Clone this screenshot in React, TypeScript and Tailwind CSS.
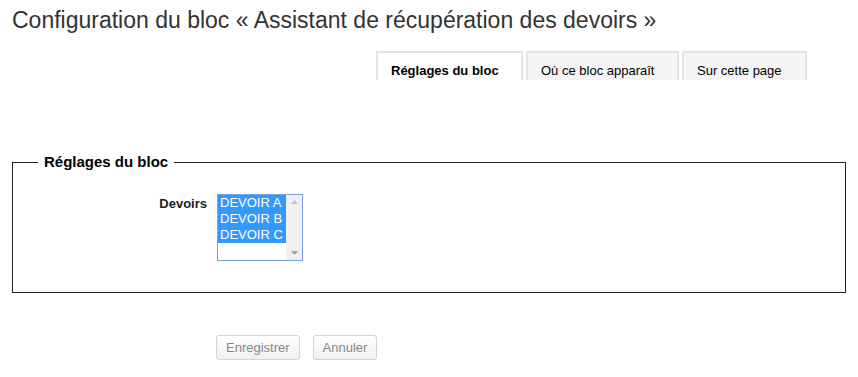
const tabs = [
  { label: "Réglages du bloc", active: true, w: "w-[147px]" },
  { label: "Où ce bloc apparaît", active: false, w: "w-[153px]" },
  { label: "Sur cette page", active: false, w: "w-[125px]" },
];

const devoirs = ["DEVOIR A", "DEVOIR B", "DEVOIR C"];

export default function App() {
  return (
    <div className="h-[377px] w-[858px] overflow-hidden bg-white font-['Liberation_Sans',Arial,sans-serif] text-[#333]">
      <h2 className="px-3 pt-[7px] text-[23px] leading-[26px] text-[#333]">
        Configuration du bloc « Assistant de récupération des devoirs »
      </h2>

      {/* Tabs */}
      <div className="mt-[18px] flex gap-[3px] pl-[376px]">
        {tabs.map((t) => (
          <div
            key={t.label}
            className={`${t.w} h-[29px] border-2 border-b-0 border-[#e3e3e3] pl-[13px] pt-[10px] text-[13px] leading-[16px] text-black ${
              t.active ? "bg-white font-bold" : "bg-[#f5f5f5]"
            }`}
          >
            {t.label}
          </div>
        ))}
      </div>

      {/* Fieldset */}
      <fieldset className="mx-3 mt-[73px] h-[140px] border border-[#222] px-0">
        <legend className="ml-[25px] px-[6px] text-[15px] font-bold leading-[18px] text-black">
          Réglages du bloc
        </legend>
        <div className="mt-[23px] flex">
          <div className="w-[194px] pt-[2px] text-right text-[13px] font-bold leading-[16px] text-[#222]">
            Devoirs
          </div>
          <div className="ml-[10px] flex h-[67px] w-[86px] border border-[#7aa0e6] bg-white">
            <div className="min-w-0 flex-1">
              {devoirs.map((d) => (
                <div
                  key={d}
                  className="whitespace-nowrap bg-[#3399ff] pl-[2px] text-[13px] leading-[16px] text-white"
                >
                  {d}
                </div>
              ))}
            </div>
            <div className="flex w-[16px] shrink-0 flex-col items-center justify-between bg-[#f0f0f0] py-[5px]">
              <svg width="7" height="4" viewBox="0 0 7 4">
                <path d="M0 4 L3.5 0 L7 4 Z" fill="#c3c3c3" />
              </svg>
              <svg width="7" height="4" viewBox="0 0 7 4">
                <path d="M0 0 L3.5 4 L7 0 Z" fill="#a3a3a3" />
              </svg>
            </div>
          </div>
        </div>
      </fieldset>

      {/* Buttons */}
      <div className="mt-[42px] flex gap-[13px] pl-[216px]">
        <button
          disabled
          className="h-[25px] rounded-[3px] border border-[#d3d3d3] bg-gradient-to-b from-white to-[#f0f0f0] px-[9px] text-[13px] text-[#888]"
        >
          Enregistrer
        </button>
        <button
          disabled
          className="h-[25px] rounded-[3px] border border-[#d3d3d3] bg-gradient-to-b from-white to-[#f0f0f0] px-[9px] text-[13px] text-[#888]"
        >
          Annuler
        </button>
      </div>
    </div>
  );
}
